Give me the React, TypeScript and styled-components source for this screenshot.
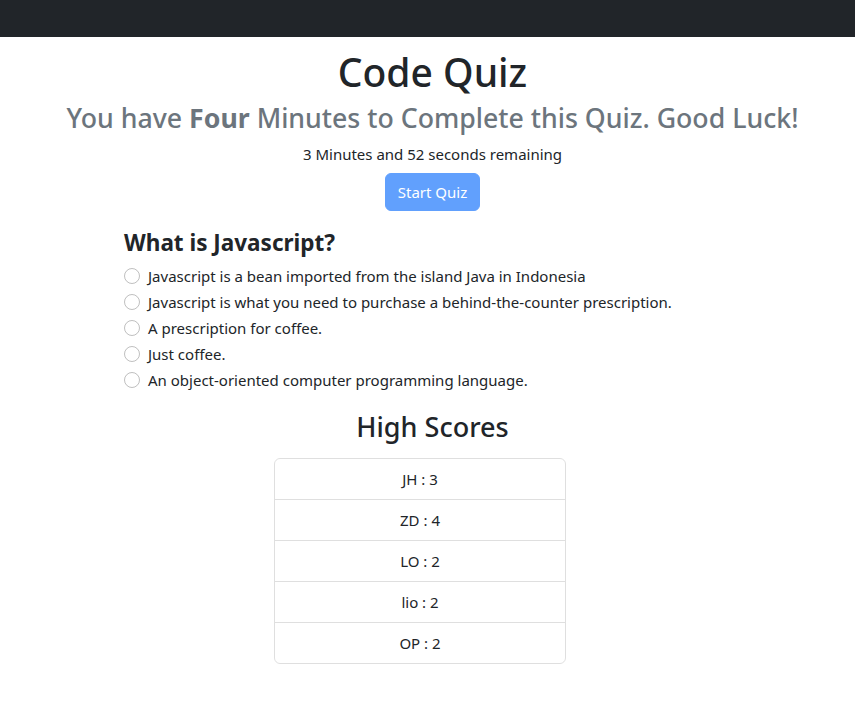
import React from "react";
import styled, { createGlobalStyle } from "styled-components";

const Global = createGlobalStyle`
  body {
    margin: 0;
    font-family: "Noto Sans", "Open Sans", sans-serif;
    color: #212529;
    background: #fff;
    font-size: 15px;
    line-height: 1.5;
  }
  * { box-sizing: border-box; }
`;

const NavBar = styled.nav`
  height: 37px;
  background: #212529;
`;

const Main = styled.main`
  padding-left: 10px;
  display: flex;
  flex-direction: column;
  align-items: center;
  text-align: center;
`;

const Title = styled.h1`
  font-size: 39px;
  font-weight: 500;
  line-height: 1.2;
  margin: 12px 0 6px;
`;

const Subtitle = styled.h3`
  font-size: 26.7px;
  font-weight: 500;
  line-height: 1.2;
  color: #6c757d;
  margin: 0 0 8px;
  b { font-weight: 700; }
`;

const Timer = styled.p`
  margin: 0 0 7px;
  font-size: 15px;
  line-height: 24px;
`;

const StartButton = styled.button`
  font-family: inherit;
  font-size: 15px;
  line-height: 24px;
  padding: 6px 12px;
  border: 1px solid #0d6efd;
  border-radius: 6px;
  background: #0d6efd;
  color: #fff;
  opacity: 0.65;
`;

const QuizBlock = styled.section`
  align-self: stretch;
  text-align: left;
  padding-left: 114px;
  margin-top: 18px;
`;

const Question = styled.h4`
  font-size: 22.5px;
  font-weight: 700;
  line-height: 1.2;
  margin: 0 0 8px;
`;

const Option = styled.label`
  display: flex;
  align-items: center;
  gap: 8px;
  min-height: 24px;
  margin-bottom: 2px;
  font-size: 15px;
`;

const Radio = styled.span`
  width: 16px;
  height: 16px;
  border-radius: 50%;
  border: 1px solid rgba(0, 0, 0, 0.25);
  flex: none;
`;

const ScoresTitle = styled.h2`
  font-size: 27px;
  font-weight: 500;
  line-height: 1.2;
  margin: 17px 0 15px;
`;

const ScoreList = styled.ul`
  list-style: none;
  margin: 0 25px 0 0;
  padding: 0;
  width: 292px;
  border: 1px solid rgba(0, 0, 0, 0.125);
  border-radius: 6px;
`;

const ScoreItem = styled.li`
  padding: 8px 16px;
  font-size: 15px;
  line-height: 24px;
  & + & { border-top: 1px solid rgba(0, 0, 0, 0.125); }
`;

const options = [
  "Javascript is a bean imported from the island Java in Indonesia",
  "Javascript is what you need to purchase a behind-the-counter prescription.",
  "A prescription for coffee.",
  "Just coffee.",
  "An object-oriented computer programming language.",
];

const scores = ["JH : 3", "ZD : 4", "LO : 2", "lio : 2", "OP : 2"];

export default function App() {
  return (
    <>
      <Global />
      <NavBar />
      <Main>
        <Title>Code Quiz</Title>
        <Subtitle>
          You have <b>Four</b> Minutes to Complete this Quiz. Good Luck!
        </Subtitle>
        <Timer>3 Minutes and 52 seconds remaining</Timer>
        <StartButton disabled>Start Quiz</StartButton>
        <QuizBlock>
          <Question>What is Javascript?</Question>
          {options.map((o) => (
            <Option key={o}>
              <Radio />
              {o}
            </Option>
          ))}
        </QuizBlock>
        <ScoresTitle>High Scores</ScoresTitle>
        <ScoreList>
          {scores.map((s) => (
            <ScoreItem key={s}>{s}</ScoreItem>
          ))}
        </ScoreList>
      </Main>
    </>
  );
}
